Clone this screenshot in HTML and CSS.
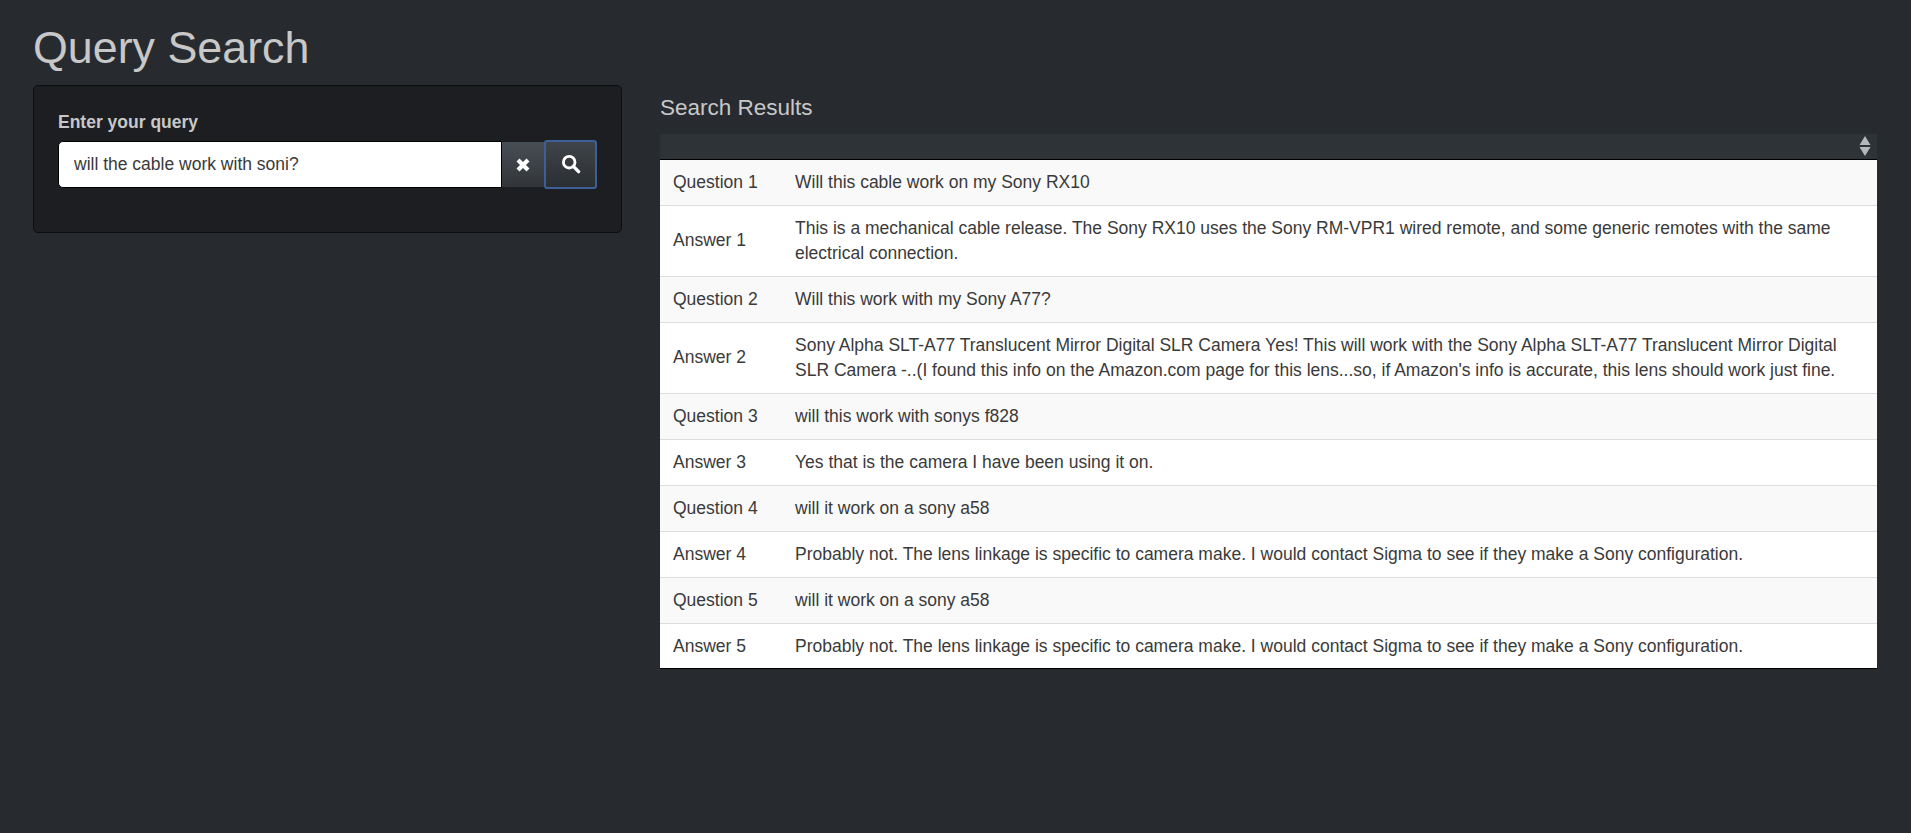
FILE: index.html
```html
<!DOCTYPE html>
<html lang="en">
<head>
	<meta charset="UTF-8">
	<title>Query Search</title>
	<link rel="stylesheet" href="styles.css">
</head>

<body>
	<div class="page">
		<h1 class="page-title">Query Search</h1>
		<div class="columns">
			<div class="sidebar">
				<label class="query-label" for="query">Enter your query</label>
				<div class="query-group">
					<input class="query-input" id="query" type="text" value="will the cable work with soni?">
					<button class="btn btn-clear" type="button" aria-label="Clear">
						<svg width="16" height="16" viewBox="0 0 16 16"><path d="M3 3 13 13M13 3 3 13" stroke="#fff" stroke-width="4.2" fill="none"/></svg>
					</button>
					<button class="btn btn-search" type="button" aria-label="Search">
						<svg class="search-icon" width="20" height="20" viewBox="0 0 20 20"><circle cx="8.2" cy="8.2" r="5.8" stroke="#fff" stroke-width="2.8" fill="none"/><path d="M12.4 12.4 17.6 17.6" stroke="#fff" stroke-width="3.4" stroke-linecap="round" fill="none"/></svg>
					</button>
				</div>
			</div>
			<div class="results">
				<h4 class="results-title">Search Results</h4>
				<table class="results-table">
					<thead>
						<tr>
							<th colspan="2">
								<svg class="sort-icon" width="12" height="20" viewBox="0 0 12 20"><path d="M6 0 11.5 9H.5ZM6 20 .5 11H11.5Z" fill="#b4b8ba"/></svg>
							</th>
						</tr>
					</thead>
					<tbody>
						<tr><td class="label-cell">Question 1</td><td>Will this cable work on my Sony RX10</td></tr>
						<tr><td class="label-cell">Answer 1</td><td>This is a mechanical cable release. The Sony RX10 uses the Sony RM-VPR1 wired remote, and some generic remotes with the same electrical connection.</td></tr>
						<tr><td class="label-cell">Question 2</td><td>Will this work with my Sony A77?</td></tr>
						<tr><td class="label-cell">Answer 2</td><td>Sony Alpha SLT-A77 Translucent Mirror Digital SLR Camera Yes! This will work with the Sony Alpha SLT-A77 Translucent Mirror Digital SLR Camera -..(I found this info on the Amazon.com page for this lens...so, if Amazon's info is accurate, this lens should work just fine.</td></tr>
						<tr><td class="label-cell">Question 3</td><td>will this work with sonys f828</td></tr>
						<tr><td class="label-cell">Answer 3</td><td>Yes that is the camera I have been using it on.</td></tr>
						<tr><td class="label-cell">Question 4</td><td>will it work on a sony a58</td></tr>
						<tr><td class="label-cell">Answer 4</td><td>Probably not. The lens linkage is specific to camera make. I would contact Sigma to see if they make a Sony configuration.</td></tr>
						<tr><td class="label-cell">Question 5</td><td>will it work on a sony a58</td></tr>
						<tr><td class="label-cell">Answer 5</td><td>Probably not. The lens linkage is specific to camera make. I would contact Sigma to see if they make a Sony configuration.</td></tr>
					</tbody>
				</table>
			</div>
		</div>
	</div>
</body>
</html>
```

FILE: styles.css
```css
html,body{margin:0; padding:0;}
body{min-height:833px; background:#272b30; color:#3a3a3a; font-family:"Liberation Sans",Arial,sans-serif; font-size:17.5px; line-height:24.4px;}
.page{padding:0 34px 0 33px;}
.page-title{margin:0; padding-top:21px; height:85px; font-size:44.8px; line-height:53px; font-weight:400; color:#c8c8c8; box-sizing:border-box;}
.columns{display:flex; align-items:flex-start; gap:38px;}

.sidebar{width:589px; height:148px; flex:none; box-sizing:border-box; padding:24px 24px 0; background:#1c1e22; border:1px solid #0c0d0e; border-radius:5px;}
.query-label{display:block; height:30px; font-weight:700; color:#c8c8c8;}
.query-group{display:flex; align-items:center;}
.query-input{width:444px; height:47px; box-sizing:border-box; padding:0 15px; border:1px solid #000; border-radius:5px 0 0 5px; background:#fff; color:#3a3a3a; font-family:inherit; font-size:17.5px;}
.btn{display:flex; align-items:center; justify-content:center; box-sizing:border-box; padding:0; background:#3a3f44; background-image:linear-gradient(#484e55,#3a3f44 60%,#313539);}
.btn-clear{width:42px; height:45px; border:0;}
.btn-search{width:53px; height:49px; padding-bottom:2px; border:2px solid #3d5f97; border-radius:3px; background:linear-gradient(#3f444a,#2b2f33);}

.results{flex:1; min-width:0;}
.results-title{margin:0; padding-top:10px; height:49px; box-sizing:border-box; font-size:22.5px; line-height:26px; font-weight:400; color:#c8c8c8;}
.results-table{width:100%; border-collapse:collapse; background:#fff;}
.results-table th{height:25px; padding:0 6px 0 0; box-sizing:border-box; background:#2e3338; border-bottom:1px solid #000; text-align:right; line-height:0;}
.sort-icon{vertical-align:middle;}
.results-table td{padding:10px 13px; line-height:25px; border-top:1px solid #ddd; vertical-align:middle;}
.results-table tbody tr:first-child td{border-top:0;}
.results-table tbody tr:nth-child(odd){background:#f9f9f9;}
.results-table tbody tr:last-child td{padding-bottom:9px; border-bottom:1px solid #000;}
.label-cell{width:96px; white-space:nowrap;}
```
